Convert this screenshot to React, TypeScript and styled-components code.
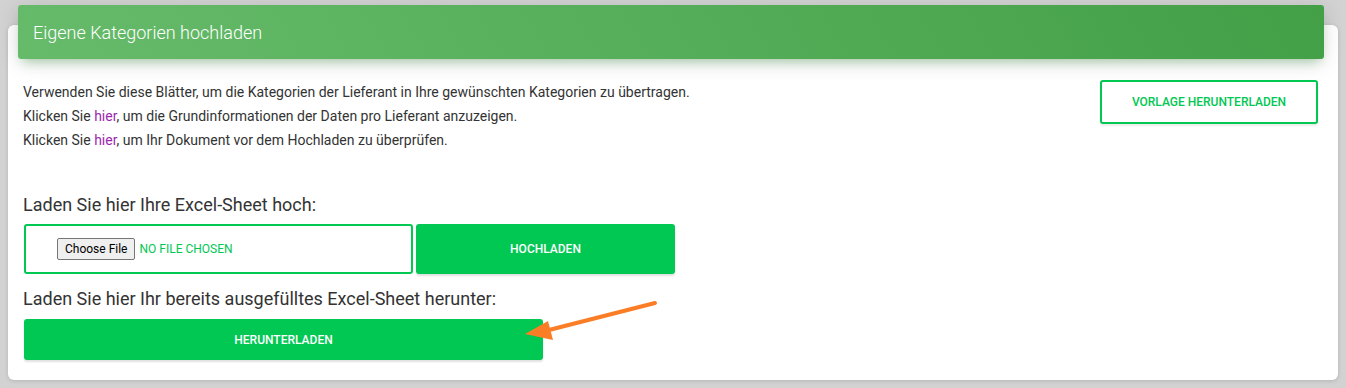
import React from 'react';
import styled, { createGlobalStyle } from 'styled-components';

const GlobalStyle = createGlobalStyle`
  html, body {
    margin: 0;
    padding: 0;
    background: #d2d2d2;
    font-family: Roboto, 'Liberation Sans', Arial, sans-serif;
  }
`;

const Page = styled.div`
  width: 1346px;
  height: 388px;
  box-sizing: border-box;
  padding: 25px 8px 0 8px;
  overflow: hidden;
`;

const Card = styled.section`
  position: relative;
  background: #fff;
  border-radius: 6px;
  box-shadow: 0 1px 4px rgba(0, 0, 0, 0.14);
  height: 355px;
  box-sizing: border-box;
  padding: 0 15px 0 15px;
  display: flex;
  flex-direction: column;
`;

const Header = styled.div`
  margin: -20px -1px 0 -5px;
  height: 54px;
  border-radius: 3px;
  background: linear-gradient(60deg, #66bb6a, #43a047);
  box-shadow: 0 4px 20px 0 rgba(0, 0, 0, 0.14), 0 7px 10px -5px rgba(76, 175, 80, 0.4);
  display: flex;
  align-items: center;
  padding: 0 15px;
  color: #fff;
  font-size: 18px;
  font-weight: 300;
`;

const Intro = styled.div`
  display: flex;
  justify-content: space-between;
  align-items: flex-start;
  margin-top: 21px;
`;

const Lines = styled.div`
  font-size: 14px;
  color: #333;
  line-height: 24px;
`;

const Link = styled.a`
  color: #9c27b0;
  text-decoration: none;
`;

const OutlineButton = styled.button`
  width: 218px;
  height: 44px;
  margin-right: 5px;
  background: #fff;
  border: 2px solid #00c853;
  border-radius: 3px;
  color: #00c853;
  font-family: Roboto, sans-serif;
  font-size: 12px;
  font-weight: 500;
  box-shadow: 0 2px 2px rgba(0, 0, 0, 0.08);
`;

const Label = styled.div`
  font-size: 18px;
  color: #333;
  font-weight: 400;
  line-height: 22px;
`;

const UploadLabel = styled(Label)`
  margin-top: 42px;
`;

const DownloadLabel = styled(Label)`
  margin-top: 14px;
`;

const UploadRow = styled.div`
  display: flex;
  gap: 3px;
  margin-top: 8px;
  padding-left: 1px;
`;

const FileBox = styled.div`
  width: 389px;
  height: 50px;
  box-sizing: border-box;
  border: 2px solid #00c853;
  border-radius: 3px;
  display: flex;
  align-items: center;
  padding-left: 31px;
  gap: 4px;
`;

const ChooseButton = styled.span`
  display: inline-flex;
  align-items: center;
  height: 22px;
  box-sizing: border-box;
  padding: 0 7px;
  border: 1px solid #767676;
  border-radius: 2px;
  background: #efefef;
  color: #000;
  font-size: 12px;
  font-family: Roboto, sans-serif;
`;

const NoFile = styled.span`
  color: #00c853;
  font-size: 12px;
`;

const SolidButton = styled.button<{ $w: number; $h: number }>`
  width: ${p => p.$w}px;
  height: ${p => p.$h}px;
  background: #00c853;
  border: none;
  border-radius: 3px;
  color: #fff;
  font-family: Roboto, sans-serif;
  font-size: 12px;
  font-weight: 500;
  box-shadow: 0 2px 2px rgba(0, 0, 0, 0.12);
`;

const DownloadRow = styled.div`
  margin-top: 9px;
  padding-left: 1px;
`;

const Arrow = styled.svg`
  position: absolute;
  left: 502px;
  top: 270px;
`;

const App: React.FC = () => {
  return (
    <Page>
      <GlobalStyle />
      <Card>
        <Header>Eigene Kategorien hochladen</Header>
        <Intro>
          <Lines>
            <div>Verwenden Sie diese Blätter, um die Kategorien der Lieferant in Ihre gewünschten Kategorien zu übertragen.</div>
            <div>Klicken Sie <Link href="#">hier</Link>, um die Grundinformationen der Daten pro Lieferant anzuzeigen.</div>
            <div>Klicken Sie <Link href="#">hier</Link>, um Ihr Dokument vor dem Hochladen zu überprüfen.</div>
          </Lines>
          <OutlineButton>VORLAGE HERUNTERLADEN</OutlineButton>
        </Intro>
        <UploadLabel>Laden Sie hier Ihre Excel-Sheet hoch:</UploadLabel>
        <UploadRow>
          <FileBox>
            <ChooseButton>Choose File</ChooseButton>
            <NoFile>NO FILE CHOSEN</NoFile>
          </FileBox>
          <SolidButton $w={259} $h={50}>HOCHLADEN</SolidButton>
        </UploadRow>
        <DownloadLabel>Laden Sie hier Ihr bereits ausgefülltes Excel-Sheet herunter:</DownloadLabel>
        <DownloadRow>
          <SolidButton $w={519} $h={41}>HERUNTERLADEN</SolidButton>
        </DownloadRow>
        <Arrow width="160" height="70" viewBox="0 0 160 70">
          <line x1="145" y1="8" x2="35" y2="36" stroke="#fb7d25" strokeWidth="4" strokeLinecap="round" />
          <polygon points="15,39 38,26 43,45" fill="#fb7d25" />
        </Arrow>
      </Card>
    </Page>
  );
};

export default App;
